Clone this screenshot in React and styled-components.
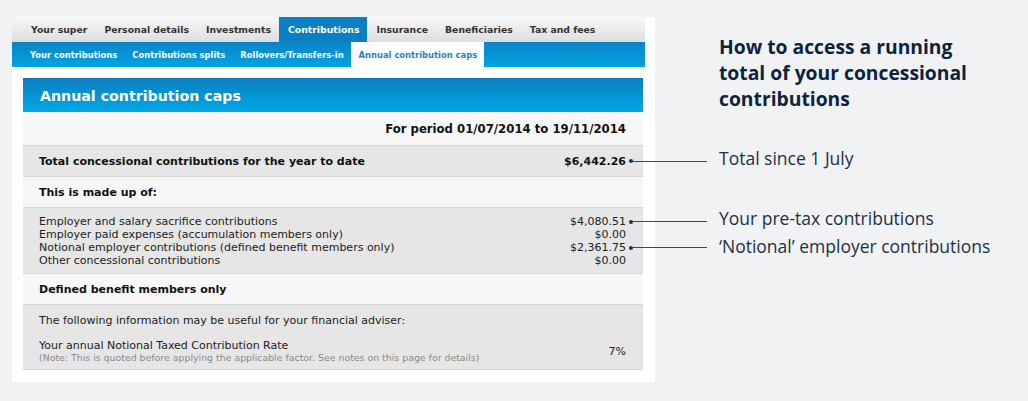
import React from 'react';
import styled, { createGlobalStyle } from 'styled-components';

const GlobalStyle = createGlobalStyle`
	body {
		margin: 0;
		background: #f1f2f4;
		font-family: "DejaVu Sans", Verdana, sans-serif;
	}
`;

export default function App() {
	const mainTabs = ['Your super', 'Personal details', 'Investments', 'Contributions', 'Insurance', 'Beneficiaries', 'Tax and fees'];
	const subTabs = ['Your contributions', 'Contributions splits', 'Rollovers/Transfers-in', 'Annual contribution caps'];

	return (
		<Page>
			<GlobalStyle />
			<Card>
				<TabBar>
					{mainTabs.map(t => (
						<Tab key={t} active={t === 'Contributions'}>{t}</Tab>
					))}
				</TabBar>
				<SubBar>
					{subTabs.map(t => (
						<SubTab key={t} active={t === 'Annual contribution caps'}>{t}</SubTab>
					))}
				</SubBar>
				<Panel>
					<PanelHeader>Annual contribution caps</PanelHeader>
					<Period>For period 01/07/2014 to 19/11/2014</Period>
					<Row shade bold>
						<span>Total concessional contributions for the year to date</span>
						<Amount>$6,442.26<Marker /></Amount>
					</Row>
					<Row bold>This is made up of:</Row>
					<Block shade>
						<Line>
							<span>Employer and salary sacrifice contributions</span>
							<Amount>$4,080.51<Marker /></Amount>
						</Line>
						<Line>
							<span>Employer paid expenses (accumulation members only)</span>
							<Amount>$0.00</Amount>
						</Line>
						<Line>
							<span>Notional employer contributions (defined benefit members only)</span>
							<Amount>$2,361.75<Marker /></Amount>
						</Line>
						<Line>
							<span>Other concessional contributions</span>
							<Amount>$0.00</Amount>
						</Line>
					</Block>
					<Row bold>Defined benefit members only</Row>
					<Block shade last>
						<Line>The following information may be useful for your financial adviser:</Line>
						<Rate>
							<div>
								<div>Your annual Notional Taxed Contribution Rate</div>
								<Note>(Note: This is quoted before applying the applicable factor. See notes on this page for details)</Note>
							</div>
							<Amount>7%</Amount>
						</Rate>
					</Block>
				</Panel>
			</Card>
			<Aside>
				<Heading>How to access a running total of your concessional contributions</Heading>
				<Label gap={36}>Total since 1 July</Label>
				<Label gap={40}>Your pre-tax contributions</Label>
				<Label gap={8}>‘Notional’ employer contributions</Label>
			</Aside>
		</Page>
	);
}

const Page = styled.div`
	display: flex;
	align-items: flex-start;
	padding: 17px 0 0 12px;
	width: 1028px;
	height: 401px;
	box-sizing: border-box;
	overflow: hidden;
`;

const Card = styled.div`
	width: 643px;
	flex: none;
	background: #fff;
	padding: 0 10px 12px 0;
	box-sizing: border-box;
`;

const TabBar = styled.div`
	display: flex;
	height: 25px;
	padding-left: 10px;
	background: linear-gradient(#f7f7f7, #dedede);
`;

const Tab = styled.div`
	display: flex;
	align-items: center;
	padding: 0 8px 0 9px;
	font-size: 9.3px;
	font-weight: bold;
	color: ${p => (p.active ? '#fff' : '#333')};
	background: ${p => (p.active ? '#0a80c2' : 'transparent')};
`;

const SubBar = styled.div`
	display: flex;
	height: 25px;
	padding-left: 10px;
	background: linear-gradient(#0a84c6, #00a4e2);
`;

const SubTab = styled.div`
	display: flex;
	align-items: center;
	padding: 0 7px 0 8px;
	font-size: 8.4px;
	font-weight: bold;
	color: ${p => (p.active ? '#1a86c6' : '#fff')};
	background: ${p => (p.active ? '#fff' : 'transparent')};
`;

const Panel = styled.div`
	margin: 11px 2px 0 11px;
	background: #f7f7f7;
	font-size: 11px;
	color: #222;
`;

const PanelHeader = styled.div`
	height: 34px;
	display: flex;
	align-items: center;
	padding-left: 17px;
	font-size: 14.2px;
	font-weight: bold;
	color: #fff;
	background: linear-gradient(#0a7fc0, #00a8e6);
	border-top: 1px solid #0a75b5;
	box-sizing: border-box;
`;

const Period = styled.div`
	height: 33px;
	display: flex;
	align-items: center;
	justify-content: flex-end;
	padding-right: 17px;
	font-size: 11.7px;
	font-weight: bold;
	color: #111;
`;

const Row = styled.div`
	height: 30px;
	display: flex;
	align-items: center;
	justify-content: space-between;
	padding: 0 17px 0 16px;
	font-weight: ${p => (p.bold ? 'bold' : 'normal')};
	color: #111;
	background: ${p => (p.shade ? '#e6e6e6' : '#f7f7f7')};
	border-top: 1px solid #d6d6d6;
`;

const Block = styled.div`
	padding: ${p => (p.last ? '9px 17px 6px 16px' : '7px 17px 6px 16px')};
	background: ${p => (p.shade ? '#e6e6e6' : '#f7f7f7')};
	border-top: 1px solid #d6d6d6;
	border-bottom: ${p => (p.last ? '1px solid #d6d6d6' : 'none')};
	line-height: 13px;
	color: #222;
`;

const Line = styled.div`
	display: flex;
	justify-content: space-between;
`;

const Rate = styled.div`
	display: flex;
	justify-content: space-between;
	align-items: center;
	margin-top: 12px;
`;

const Note = styled.div`
	font-size: 9.4px;
	line-height: 11px;
	color: #8a8a8a;
`;

const Amount = styled.span`
	position: relative;
	white-space: nowrap;
`;

const Marker = styled.span`
	position: absolute;
	right: -7px;
	top: 50%;
	width: 4px;
	height: 4px;
	margin-top: -2px;
	border-radius: 50%;
	background: #1c3147;

	&::after {
		content: '';
		position: absolute;
		left: 2px;
		top: 1.5px;
		width: 76px;
		height: 1px;
		background: #3a4b5c;
	}
`;

const Aside = styled.div`
	margin-left: 64px;
	padding-top: 17px;
	font-family: "Open Sans", sans-serif;
	color: #0c2340;
`;

const Heading = styled.div`
	width: 262px;
	font-size: 19.3px;
	line-height: 26px;
	font-weight: 700;
`;

const Label = styled.div`
	margin-top: ${p => p.gap}px;
	font-size: 17.5px;
	line-height: 20px;
	white-space: nowrap;
	color: #1c3147;
`;
